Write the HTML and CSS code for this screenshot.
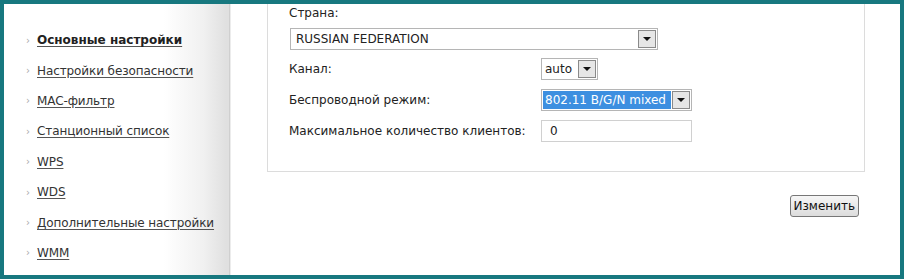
FILE: index.html
```html
<!DOCTYPE html>
<html lang="ru">
<head>
<meta charset="utf-8">
<link rel="stylesheet" href="styles.css">
</head>
<body>
<div class="frame">
  <nav class="sidebar">
    <ul class="menu">
      <li class="item active"><span class="arrow">›</span><a href="#">Основные настройки</a></li>
      <li class="item"><span class="arrow">›</span><a href="#">Настройки безопасности</a></li>
      <li class="item"><span class="arrow">›</span><a href="#">MAC-фильтр</a></li>
      <li class="item"><span class="arrow">›</span><a href="#">Станционный список</a></li>
      <li class="item"><span class="arrow">›</span><a href="#">WPS</a></li>
      <li class="item"><span class="arrow">›</span><a href="#">WDS</a></li>
      <li class="item"><span class="arrow">›</span><a href="#">Дополнительные настройки</a></li>
      <li class="item"><span class="arrow">›</span><a href="#">WMM</a></li>
    </ul>
  </nav>
  <main class="main">
    <section class="panel">
      <div class="label-top">Страна:</div>
      <div class="select country">
        <span class="value">RUSSIAN FEDERATION</span>
        <span class="btn"><span class="tri"></span></span>
      </div>
      <div class="grid">
        <div class="label">Канал:</div>
        <div class="field">
          <div class="select channel">
            <span class="value">auto</span>
            <span class="btn"><span class="tri"></span></span>
          </div>
        </div>
        <div class="label">Беспроводной режим:</div>
        <div class="field">
          <div class="select mode">
            <span class="value selected">802.11 B/G/N mixed</span>
            <span class="btn"><span class="tri"></span></span>
          </div>
        </div>
        <div class="label">Максимальное количество клиентов:</div>
        <div class="field">
          <div class="input">0</div>
        </div>
      </div>
    </section>
    <div class="actions">
      <button class="button" type="button">Изменить</button>
    </div>
  </main>
</div>
</body>
</html>
```
FILE: styles.css
```css
* { box-sizing: border-box; }
html, body { margin: 0; padding: 0; }
body {
  font-family: "DejaVu Sans", Verdana, sans-serif;
  font-size: 12px;
  color: #222;
  background: #fff;
}
.frame {
  width: 904px;
  height: 279px;
  border: 4px solid #17787f;
  background: #fff;
  display: flex;
  overflow: hidden;
}
.sidebar {
  width: 226px;
  flex: none;
  background: linear-gradient(to right, #fff 0, #fff 160px, #f0f0f0 200px, #e0e0e0 222px);
  border-right: 1px solid #cfcfcf;
  box-shadow: 1px 0 0 #ececec;
}
.menu {
  list-style: none;
  margin: 0;
  padding: 21px 0 0 0;
}
.item {
  height: 30.4px;
  display: flex;
  align-items: center;
  padding-left: 22px;
}
.arrow {
  color: #aaa;
  font-size: 10px;
  width: 11px;
}
.item a {
  color: #333;
  text-decoration: underline;
  text-underline-offset: 2px;
  text-decoration-color: #555;
  letter-spacing: -0.1px;
}
.item.active a {
  font-weight: bold;
  color: #222;
  letter-spacing: 0;
}
.main {
  flex: 1;
  padding-left: 37px;
  display: flex;
  flex-direction: column;
}
.panel {
  width: 598px;
  height: 168px;
  border: 1px solid #dcdcdc;
  border-top: none;
  padding: 0 0 0 21px;
}
.label-top {
  height: 19px;
  line-height: 19px;
  color: #222;
}
.select {
  display: flex;
  align-items: center;
  height: 22px;
  border: 1px solid #b5b5b5;
  background: #fff;
  padding: 0 1px 0 5px;
}
.country {
  width: 368px;
  margin: 5px 0 0 1px;
}
.value {
  flex: 1;
  white-space: nowrap;
}
.btn {
  width: 18px;
  height: 18px;
  border: 1px solid #8a8a8a;
  background: #e6e6e6;
  display: flex;
  align-items: center;
  justify-content: center;
  flex: none;
}
.tri {
  width: 0;
  height: 0;
  border-left: 4px solid transparent;
  border-right: 4px solid transparent;
  border-top: 4px solid #111;
}
.grid {
  display: grid;
  grid-template-columns: 252px auto;
  grid-auto-rows: 31px;
  align-items: center;
  margin-top: 3px;
}
.field {
  display: flex;
}
.channel {
  width: 57px;
  padding-left: 3px;
}
.mode {
  width: 151px;
  padding-left: 1px;
}
.selected {
  background: #3d8fe0;
  color: #fff;
  line-height: 18px;
  padding-left: 2px;
  margin-right: 1px;
}
.input {
  width: 151px;
  height: 22px;
  border: 1px solid #d0d0d0;
  line-height: 20px;
  padding-left: 8px;
}
.actions {
  display: flex;
  justify-content: flex-end;
  padding: 23px 41px 0 0;
}
.button {
  font-family: "DejaVu Sans", Verdana, sans-serif;
  font-size: 12px;
  color: #111;
  height: 22px;
  padding: 0 3px;
  border: 1px solid #777;
  border-radius: 3px;
  background: linear-gradient(#f6f6f6, #dcdcdc);
}
```
